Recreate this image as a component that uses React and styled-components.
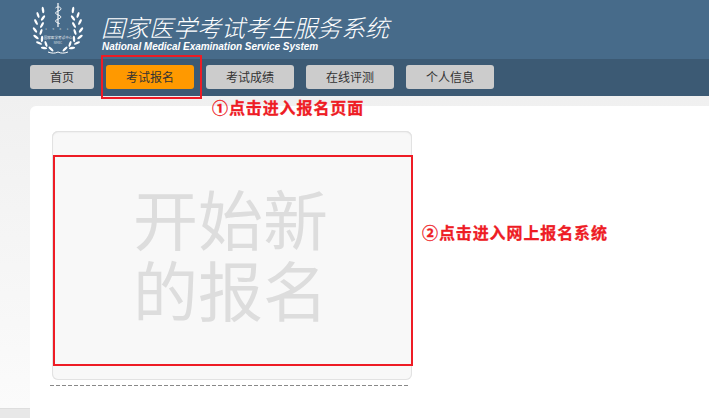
import styled, { createGlobalStyle } from "styled-components";

const GlobalStyle = createGlobalStyle`
  html, body {
    margin: 0;
    height: 100%;
    overflow: hidden;
    font-family: "Liberation Sans", "Noto Sans CJK SC", sans-serif;
  }
  #root {
    height: 100%;
  }
`;

const navItems = ["首页", "考试报名", "考试成绩", "在线评测", "个人信息"];

const leftLeaves = [
  [43, 10, -8],
  [38, 15, -18],
  [43, 18, 35],
  [36, 22, -28],
  [42, 25, 30],
  [35, 30, -36],
  [41, 32, 18],
  [36, 37, -52],
  [42, 39, 2],
  [39, 43, -66],
  [46, 44, -18],
  [44, 48, -80],
  [51, 49, -45],
];

const Logo = () => (
  <LogoSvg viewBox="0 0 60 56" width="60" height="56">
    {leftLeaves.map(([x, y, r], i) => (
      <g key={i} fill="#fff">
        <ellipse cx={x - 28} cy={y} rx="1.2" ry="3.2" transform={`rotate(${r} ${x - 28} ${y})`} />
        <ellipse cx={88 - x} cy={y} rx="1.2" ry="3.2" transform={`rotate(${-r} ${88 - x} ${y})`} />
      </g>
    ))}
    <path d="M30 3v24" stroke="#fff" strokeWidth="1.2" fill="none" />
    <path
      d="M27.5 8c2.5-2 5.5-1 5.5 1s-5.5 2-5.5 4 5.5 2 5.5 4-5.5 2-5.5 4 4.500 2 4.500 3"
      stroke="#fff"
      strokeWidth="0.9"
      fill="none"
    />
    <path d="M20 52c4 1.500 7 1.500 10 0 3 1.500 6 1.500 10 0" stroke="#fff" strokeWidth="1" fill="none" />
    <LogoText x="30" y="30" fontSize="2.8" letterSpacing="2.5" opacity="0.8">
      1 9 8 1
    </LogoText>
    <LogoText x="30" y="39" fontSize="3.6" opacity="0.85">
      国家医学考试中心
    </LogoText>
    <LogoText x="30" y="44" fontSize="3" opacity="0.8">
      NMEC
    </LogoText>
  </LogoSvg>
);

const App = () => {
  return (
    <Page>
      <GlobalStyle />
      <Header>
        <Logo />
        <Brand>
          <BrandTitle>国家医学考试考生服务系统</BrandTitle>
          <BrandSub>National Medical Examination Service System</BrandSub>
        </Brand>
      </Header>
      <Nav>
        {navItems.map((item) => (
          <NavButton key={item} $active={item === "考试报名"} $wide={item !== "首页"}>
            {item}
          </NavButton>
        ))}
        <NavHighlight />
      </Nav>
      <Body>
        <Panel>
          <Callout $top={-9} $left={182}>
            ①点击进入报名页面
          </Callout>
          <Card>
            <CardInner>
              <BigText>
                开始新
                <br />
                的报名
              </BigText>
            </CardInner>
          </Card>
          <Dashed />
          <Callout $top={116} $left={392}>
            ②点击进入网上报名系统
          </Callout>
        </Panel>
      </Body>
    </Page>
  );
};

const Page = styled.div`
  height: 418px;
  display: flex;
  flex-direction: column;
  overflow: hidden;
`;
const Header = styled.header`
  height: 59px;
  flex: none;
  box-sizing: border-box;
  padding-left: 28px;
  display: flex;
  background: #476b8a;
`;
const LogoSvg = styled.svg`
  display: block;
  flex: none;
`;
const LogoText = styled.text`
  fill: #fff;
  text-anchor: middle;
  font-family: "Noto Sans CJK SC", sans-serif;
`;
const Brand = styled.div`
  margin-left: 13px;
  padding-top: 12px;
  color: #fff;
  font-style: italic;
`;
const BrandTitle = styled.div`
  font-family: "Noto Sans CJK SC", sans-serif;
  font-size: 24px;
  line-height: 30px;
  font-weight: 300;
  white-space: nowrap;
`;
const BrandSub = styled.div`
  margin-left: 1px;
  font-size: 10px;
  line-height: 10px;
  font-weight: 700;
  letter-spacing: -0.04px;
  white-space: nowrap;
`;
const Nav = styled.nav`
  position: relative;
  height: 37px;
  flex: none;
  box-sizing: border-box;
  padding: 6px 0 0 30px;
  display: flex;
  gap: 12px;
  background: #3c5a74;
`;
const NavButton = styled.div`
  width: ${(p) => (p.$wide ? "88px" : "64px")};
  height: 24px;
  border-radius: 3px;
  background: ${(p) => (p.$active ? "#ff9900" : "#cccccc")};
  color: #333;
  font-family: "Noto Sans CJK SC", sans-serif;
  font-size: 12px;
  line-height: 24px;
  text-align: center;
`;
const NavHighlight = styled.div`
  position: absolute;
  left: 101px;
  top: -4px;
  width: 101px;
  height: 44px;
  box-sizing: border-box;
  border: 2px solid #ee1c25;
`;
const Body = styled.main`
  flex: 1;
  min-height: 0;
  box-sizing: border-box;
  padding: 10px 0 0 30px;
  background: linear-gradient(#f0f0f0, #fbfbfb 312px, #dedede 312px, #dedede 313px, #e8e8e8 313px);
`;
const Panel = styled.div`
  position: relative;
  height: 100%;
  box-sizing: border-box;
  padding: 25px 0 0 22px;
  background: #fff;
  border-radius: 6px 0 0 0;
`;
const Callout = styled.div`
  position: absolute;
  left: ${(p) => p.$left}px;
  top: ${(p) => p.$top}px;
  color: #ee1c25;
  font-family: "Noto Sans CJK SC", sans-serif;
  font-size: 16px;
  font-weight: 700;
  line-height: 20px;
  letter-spacing: 0.9px;
  -webkit-text-stroke: 0.3px #ee1c25;
  white-space: nowrap;
`;
const Card = styled.div`
  position: relative;
  width: 360px;
  height: 249px;
  box-sizing: border-box;
  background: #f8f8f8;
  border-radius: 6px;
  box-shadow: inset 0 0 0 1px #e2e2e2, inset 0 1px 2px #ddd;
`;
const CardInner = styled.div`
  position: absolute;
  left: 1px;
  top: 24px;
  width: 360px;
  height: 211px;
  box-sizing: border-box;
  border: 2px solid #ee1c25;
  padding: 25px 0 0 78px;
`;
const BigText = styled.div`
  color: #dddddd;
  font-family: "Noto Sans CJK SC", sans-serif;
  font-size: 65px;
  line-height: 71px;
`;
const Dashed = styled.div`
  width: 360px;
  height: 1px;
  margin: 5px 0 0 -2px;
  background: repeating-linear-gradient(90deg, #888 0 4px, transparent 4px 6px);
`;

export default App;
